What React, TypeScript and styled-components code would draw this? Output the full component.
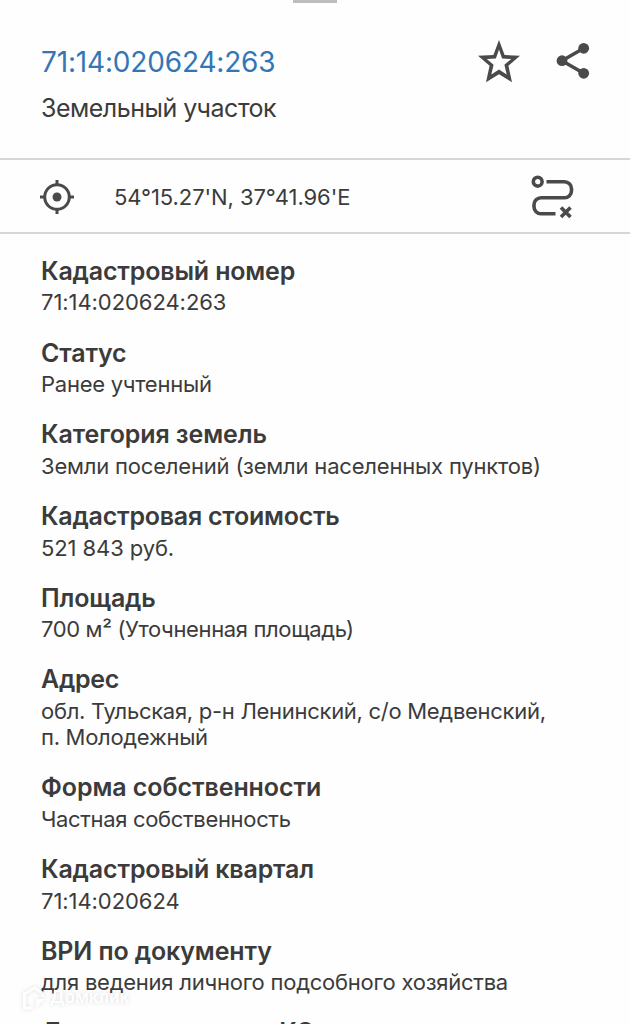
import React from 'react';
import styled, { createGlobalStyle } from 'styled-components';

const GlobalStyle = createGlobalStyle`
  * {
    box-sizing: border-box;
  }

  body {
    margin: 0;
    background: #fefefe;
    font-family: Inter, 'Noto Sans', sans-serif;
    color: #3b3b3b;
  }
`;

const Sheet = styled.main`
  position: relative;
  height: 1024px;
  overflow: hidden;
  background: #fefefe;
`;

const Handle = styled.div`
  width: 44px;
  height: 3px;
  margin: 0 auto;
  background: #bdbdbd;
`;

const Header = styled.header`
  display: flex;
  justify-content: space-between;
  height: 155px;
  padding: 38px 39px 0 41px;
`;

const CadastralNumber = styled.h1`
  margin: 1px 0 0;
  font-size: 28px;
  line-height: 40px;
  font-weight: 400;
  letter-spacing: -0.17px;
  color: #3476b5;
  white-space: nowrap;
`;

const ObjectType = styled.p`
  margin: 8px 0 0;
  font-size: 25px;
  line-height: 36px;
  letter-spacing: -0.5px;
  white-space: nowrap;
`;

const Actions = styled.div`
  display: flex;
  gap: 29px;
`;

const IconButton = styled.button`
  display: block;
  width: 42px;
  height: 42px;
  padding: 0;
  border: none;
  background: none;
  color: #4a4a4a;
  cursor: pointer;

  svg {
    display: block;
    overflow: visible;
  }
`;

const CoordinatesBar = styled.div`
  display: flex;
  align-items: center;
  height: 76px;
  padding: 2px 56px 0 39px;
  border-top: 2px solid #d6d6d6;
  border-bottom: 2px solid #d6d6d6;
`;

const Coordinates = styled.span`
  flex: 1;
  margin-left: 39px;
  font-size: 22px;
  letter-spacing: -0.07px;
  white-space: nowrap;
`;

const Details = styled.dl`
  display: flex;
  flex-direction: column;
  gap: 22.15px;
  margin: 0;
  padding: 21.8px 41px 0;
`;

const Label = styled.dt<{ $spacing: number }>`
  font-size: 25px;
  line-height: 30px;
  font-weight: 600;
  letter-spacing: ${({ $spacing }) => $spacing}px;
  white-space: nowrap;
`;

const Value = styled.dd<{ $spacing: number }>`
  margin: 3.6px 0 0;
  font-size: 22px;
  line-height: 26px;
  letter-spacing: ${({ $spacing }) => $spacing}px;
  white-space: pre-line;
`;

const Watermark = styled.div`
  position: absolute;
  left: 21px;
  top: 984px;
  display: flex;
  align-items: center;
  gap: 4px;
  color: rgba(255, 255, 255, 0.9);
  font-size: 17px;
  line-height: 27px;
  font-weight: 600;
  letter-spacing: 0.2px;
  filter: drop-shadow(0 0 2px rgba(0, 0, 0, 0.14));
`;

const StarIcon = () => (
  <svg width="42" height="42" viewBox="0 1 42 42" fill="currentColor">
    <path
      fillRule="evenodd"
      d="M21 0l5.600 15 15.400.8-11.600 9.900 3.600 16.500L21 34.200 8 42.200l3.600-16.500L0 15.800l15.400-.8zM21 9.400l-3.100 9-9.100.6 6.800 5.700-2.300 9.800L21 29.600l7.700 4.900-2.300-9.800 6.800-5.700-9.100-.6z"
    />
  </svg>
);

const ShareIcon = () => (
  <svg width="42" height="42" viewBox="0 0 42 42" fill="currentColor">
    <path d="M34.700 7.300 13 19.700 34.700 32.300" fill="none" stroke="currentColor" strokeWidth="3.500" />
    <circle cx="34.700" cy="7.300" r="5.400" />
    <circle cx="13" cy="19.700" r="5.400" />
    <circle cx="34.700" cy="32.300" r="5.400" />
  </svg>
);

const TargetIcon = () => (
  <svg width="36" height="36" viewBox="0 0 36 36" fill="none" stroke="#4a4a4a" strokeWidth="3">
    <circle cx="18" cy="18" r="12.300" />
    <circle cx="18" cy="18" r="4.500" fill="#4a4a4a" stroke="none" />
    <path d="M18 1v5M18 30v5M1 18h5M30 18h5" />
  </svg>
);

const RouteIcon = () => (
  <svg width="42" height="42" viewBox="0 0 42 42" fill="none" stroke="currentColor" strokeWidth="3.600">
    <circle cx="5.700" cy="5.700" r="4.400" />
    <path d="M14.500 5.700H32.500a7 7 0 0 1 7 7v2a7 7 0 0 1-7 7H9a7 7 0 0 0-7 7v2a7 7 0 0 0 7 7h14.500" />
    <path d="M29 31.500l9.500 9.500M38.500 31.500l-9.500 9.500" />
  </svg>
);

interface Detail {
  label: string;
  value: string;
  labelSpacing: number;
  valueSpacing: number;
}

const details: Detail[] = [
  { label: 'Кадастровый номер', value: '71:14:020624:263', labelSpacing: -0.17, valueSpacing: -0.06 },
  { label: 'Статус', value: 'Ранее учтенный', labelSpacing: -0.17, valueSpacing: -0.25 },
  {
    label: 'Категория земель',
    value: 'Земли поселений (земли населенных пунктов)',
    labelSpacing: -0.1,
    valueSpacing: -0.19,
  },
  { label: 'Кадастровая стоимость', value: '521 843 руб.', labelSpacing: -0.24, valueSpacing: -0.1 },
  { label: 'Площадь', value: '700 м² (Уточненная площадь)', labelSpacing: -0.17, valueSpacing: -0.36 },
  {
    label: 'Адрес',
    value: 'обл. Тульская, р-н Ленинский, с/о Медвенский,\nп. Молодежный',
    labelSpacing: -0.3,
    valueSpacing: -0.29,
  },
  { label: 'Форма собственности', value: 'Частная собственность', labelSpacing: -0.08, valueSpacing: -0.33 },
  { label: 'Кадастровый квартал', value: '71:14:020624', labelSpacing: -0.16, valueSpacing: -0.06 },
  {
    label: 'ВРИ по документу',
    value: 'для ведения личного подсобного хозяйства',
    labelSpacing: -0.12,
    valueSpacing: -0.24,
  },
  { label: 'Дата определения КС', value: '', labelSpacing: -0.17, valueSpacing: 0 },
];

export default function App() {
  return (
    <>
      <GlobalStyle />
      <Sheet>
        <Handle />
        <Header>
          <div>
            <CadastralNumber>71:14:020624:263</CadastralNumber>
            <ObjectType>Земельный участок</ObjectType>
          </div>
          <Actions>
            <IconButton aria-label="В избранное">
              <StarIcon />
            </IconButton>
            <IconButton aria-label="Поделиться">
              <ShareIcon />
            </IconButton>
          </Actions>
        </Header>
        <CoordinatesBar>
          <TargetIcon />
          <Coordinates>54°15.27'N, 37°41.96'E</Coordinates>
          <IconButton aria-label="Сбросить маршрут">
            <RouteIcon />
          </IconButton>
        </CoordinatesBar>
        <Details>
          {details.map(({ label, value, labelSpacing, valueSpacing }) => (
            <div key={label}>
              <Label $spacing={labelSpacing}>{label}</Label>
              <Value $spacing={valueSpacing}>{value}</Value>
            </div>
          ))}
        </Details>
        <Watermark>
          <svg width="25" height="26" viewBox="0 0 24 26" fill="none" stroke="currentColor" strokeWidth="3">
            <path d="M10 23H3V9l10-6 8 5v4" />
            <path d="M14 14h9l-8 9z" fill="currentColor" stroke="none" />
          </svg>
          Домклик
        </Watermark>
      </Sheet>
    </>
  );
}
